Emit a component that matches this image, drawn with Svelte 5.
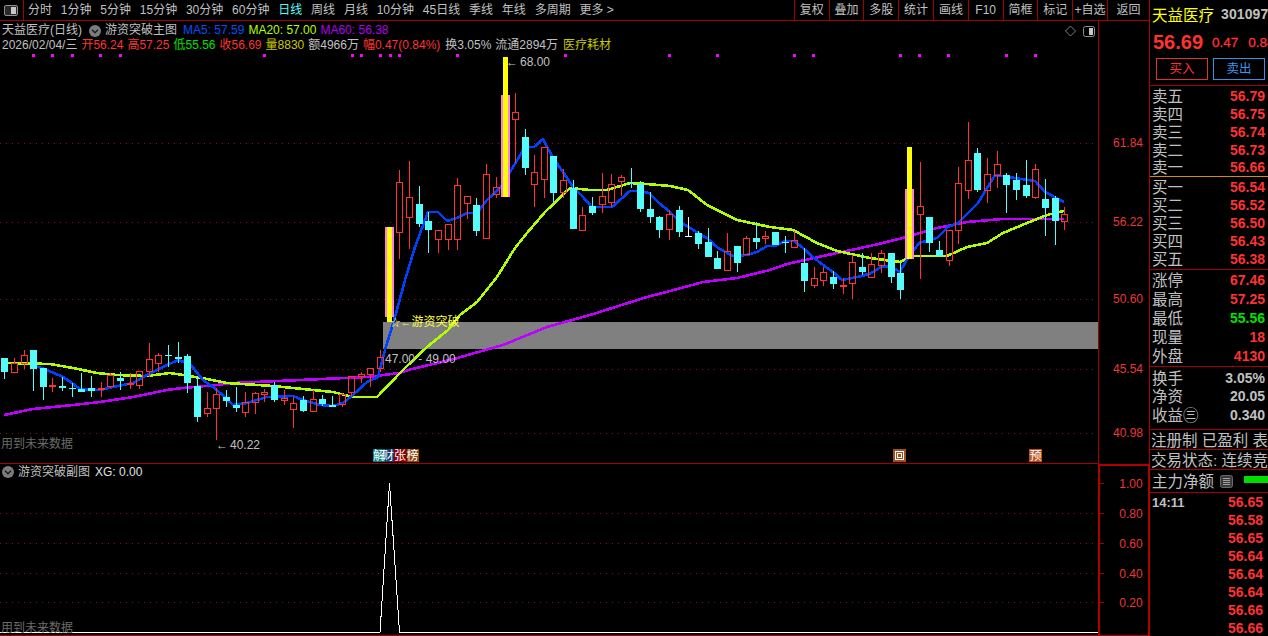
<script lang="ts">
  const periods = ['分时', '1分钟', '5分钟', '15分钟', '30分钟', '60分钟', '日线', '周线', '月线', '10分钟', '45日线', '季线', '年线', '多周期', '更多 >']
  const tools = ['复权', '叠加', '多股', '统计', '画线', 'F10', '简框', '标记', '+自选', '返回']

  // top, bottom, high, low, kind (r hollow red, c cyan, w white), null = signal bar
  type Bar = [number, number, number, number, string] | null
  const bars: Bar[] = [
    [358, 372, 358, 379, 'c'], [363, 372, 358, 372, 'r'], [355, 363, 350, 369, 'r'], [350, 369, 350, 391, 'c'],
    [368, 387, 368, 400, 'c'], [385, 386, 378, 392, 'r'], [386, 388, 377, 391, 'c'], [388, 389, 383, 397, 'c'],
    [389, 392, 373, 392, 'c'], [388, 391, 376, 397, 'c'], [388, 389, 382, 397, 'r'], [375, 386, 373, 388, 'r'],
    [378, 381, 372, 390, 'c'], [383, 384, 373, 389, 'r'], [371, 385, 371, 389, 'r'], [359, 371, 343, 377, 'r'],
    [355, 363, 353, 372, 'r'], [355, 356, 345, 367, 'c'], [357, 359, 342, 363, 'c'], [356, 383, 354, 393, 'c'],
    [386, 417, 376, 422, 'c'], [408, 413, 392, 417, 'r'], [394, 408, 388, 440, 'r'], [397, 401, 390, 407, 'c'],
    [405, 408, 387, 412, 'c'], [402, 412, 392, 417, 'r'], [393, 402, 392, 414, 'r'], [392, 394, 389, 402, 'r'],
    [385, 400, 382, 402, 'c'], [398, 400, 390, 405, 'r'], [403, 409, 397, 428, 'r'], [400, 411, 396, 412, 'c'],
    [399, 411, 390, 411, 'r'], [399, 404, 395, 406, 'c'], [405, 407, 396, 407, 'c'], [394, 404, 393, 407, 'r'],
    [376, 392, 376, 397, 'r'], [374, 376, 372, 383, 'r'], [368, 374, 368, 387, 'r'], [357, 368, 350, 372, 'r'],
    null,
    [182, 232, 170, 259, 'r'], [197, 217, 161, 249, 'r'], [204, 224, 186, 227, 'c'], [221, 230, 212, 253, 'c'],
    [230, 239, 230, 253, 'r'], [224, 239, 224, 250, 'r'], [185, 239, 178, 250, 'r'], [196, 203, 196, 219, 'r'],
    [205, 231, 198, 236, 'c'], [174, 238, 164, 238, 'r'], [187, 194, 177, 198, 'r'],
    null,
    [112, 119, 93, 163, 'r'], [137, 168, 129, 175, 'c'], [172, 184, 155, 207, 'r'], [147, 179, 147, 198, 'r'],
    [156, 193, 156, 204, 'c'], [180, 192, 169, 198, 'r'], [188, 229, 180, 229, 'c'], [215, 230, 207, 230, 'r'],
    [206, 213, 197, 215, 'c'], [196, 204, 173, 213, 'r'], [184, 202, 174, 207, 'r'], [177, 181, 175, 196, 'r'],
    [182, 183, 168, 188, 'c'], [184, 209, 181, 212, 'c'], [209, 217, 192, 223, 'c'], [217, 230, 216, 238, 'c'],
    [214, 229, 210, 240, 'r'], [210, 232, 206, 237, 'c'], [236, 236, 217, 237, 'w'], [233, 244, 231, 249, 'c'],
    [242, 257, 228, 257, 'c'], [258, 269, 251, 269, 'c'], [251, 270, 233, 270, 'r'], [246, 263, 246, 272, 'c'],
    [238, 254, 236, 254, 'r'], [238, 242, 222, 249, 'c'], [236, 238, 231, 244, 'r'], [232, 245, 232, 245, 'c'],
    [242, 243, 236, 253, 'c'], [240, 247, 231, 247, 'r'], [263, 281, 248, 292, 'c'], [278, 285, 267, 288, 'r'],
    [272, 280, 267, 286, 'r'], [277, 284, 271, 289, 'c'], [285, 286, 278, 294, 'r'], [262, 283, 255, 299, 'r'],
    [267, 272, 253, 275, 'c'], [264, 277, 253, 277, 'r'], [253, 265, 250, 273, 'r'], [253, 277, 253, 283, 'c'],
    [273, 290, 263, 299, 'c'],
    null,
    [206, 214, 162, 279, 'r'], [217, 243, 217, 252, 'c'], [250, 256, 241, 256, 'c'], [230, 260, 230, 266, 'r'],
    [183, 230, 167, 244, 'r'], [160, 190, 122, 199, 'r'], [153, 190, 148, 192, 'c'], [174, 190, 158, 203, 'r'],
    [164, 175, 151, 188, 'r'], [175, 185, 173, 213, 'c'], [180, 190, 173, 200, 'c'], [185, 196, 160, 198, 'c'],
    [169, 197, 164, 199, 'r'], [199, 208, 179, 236, 'c'], [198, 221, 196, 245, 'c'], [214, 221, 207, 230, 'r'],
  ]
  const barX = (i: number) => Math.round(4.3 + 9.635 * i)

  // signal bars: left x, pink top, yellow top, bottom of pink, bottom of yellow
  const signals = [
    { x: 385, top: 227, yTop: 227, bottom: 317, yBottom: 322 },
    { x: 501, top: 95, yTop: 57, bottom: 197, yBottom: 197 },
    { x: 905, top: 189, yTop: 147, bottom: 259, yBottom: 259 },
  ]

  const ma5 = '33,365 47,370 63,377 72,383 80,389 100,390 113,387 133,383 147,375 167,365 178,360 190,364 203,380 217,390 233,405 247,403 267,397 293,396 303,400 320,405 333,406 343,403 353,395 367,382 378,377 385,350 395,317 405,280 415,247 428,212 438,212 447,221 457,218 467,213 477,213 487,200 501,187 510,172 525,147 534,147 543,139 553,158 563,172 573,187 583,197 592,207 612,207 630,191 640,191 649,193 659,203 670,212 680,222 690,228 698,233 707,238 718,248 733,256 747,255 757,252 767,246 775,246 785,241 794,241 803,248 813,257 823,265 833,272 842,280 862,276 871,273 881,267 890,266 900,272 908,258 919,243 937,238 948,227 958,223 978,203 995,175 1035,181 1045,192 1064,202'
  const ma20 = '8,363 50,364 73,368 97,373 117,375 147,376 170,373 183,375 207,379 227,383 273,386 293,388 333,392 353,397 377,397 400,373 405,368 427,347 448,330 460,315 477,302 497,277 515,248 527,233 545,212 570,188 590,190 607,190 630,183 647,184 670,186 688,190 707,205 737,220 770,227 793,230 817,243 837,251 870,258 900,262 913,256 947,256 967,247 987,243 1003,233 1027,223 1047,215 1064,211'
  const ma60 = '4,415 33,409 73,405 100,402 133,397 167,390 183,388 217,385 233,383 300,380 367,377 400,373 408,370 450,360 503,345 547,327 590,315 647,297 670,291 703,282 737,278 770,270 787,264 823,256 870,246 903,238 937,228 967,222 1003,219 1064,219'

  const marks = [32, 51, 71, 99, 119, 263, 351, 360, 379, 389, 398, 456, 564, 668, 716, 793, 812, 899, 918, 947, 1005, 1034]
  const mainGrid = [
    { y: 143, label: '61.84' },
    { y: 222, label: '56.22' },
    { y: 299, label: '50.60' },
    { y: 369, label: '45.54' },
    { y: 433, label: '40.98' },
  ]
  const subGrid = [
    { y: 483, label: '1.00', line: false },
    { y: 513, label: '0.80', line: true },
    { y: 543, label: '0.60', line: true },
    { y: 573, label: '0.40', line: true },
    { y: 602, label: '0.20', line: true },
  ]

  const sells = [['卖五', '56.79'], ['卖四', '56.75'], ['卖三', '56.74'], ['卖二', '56.73'], ['卖一', '56.66']]
  const buys = [['买一', '56.54'], ['买二', '56.52'], ['买三', '56.50'], ['买四', '56.43'], ['买五', '56.38']]
  const stats = [['涨停', '67.46', 'up'], ['最高', '57.25', 'up'], ['最低', '55.56', 'down'], ['现量', '18', 'up'], ['外盘', '4130', 'up']]
  const ratios = [['换手', '3.05%'], ['净资', '20.05'], ['收益㊂', '0.340']]
  const ticks = ['56.65', '56.58', '56.65', '56.64', '56.64', '56.64', '56.66', '56.66']
</script>

<div class="screen">
  <div class="left">
    <nav class="toolbar">
      <div class="toggle-cell">
        <span class="toggle"><span></span></span>
      </div>
      <div class="periods">
        {#each periods as p}
          <span class:active={p === '日线'}>{p}</span>
        {/each}
      </div>
      <div class="tools">
        {#each tools as t}
          <span class="tool">{t}</span>
        {/each}
      </div>
    </nav>

    <section class="pane main-pane">
      <svg class="chart" width="1149" height="443" viewBox="0 21 1149 443">
        {#each mainGrid as g}
          <line class="grid" x1="0" x2="1098" y1={g.y + 0.5} y2={g.y + 0.5} />
          <text class="axis" x="1128" y={g.y + 4} text-anchor="middle">{g.label}</text>
        {/each}
        {#each marks as m}
          <rect x={m} y="54" width="3" height="3" fill="#ff00ff" />
        {/each}
        <rect x="383" y="322" width="715" height="27" fill="#808080" />

        <polyline class="ma" points={ma60} stroke="#c000ff" />
        <polyline class="ma" points={ma20} stroke="#b0ff00" />
        <polyline class="ma" points={ma5} stroke="#0040ff" />

        {#each bars as b, i}
          {#if b}
            {@const x = barX(i)}
            {@const color = b[4] === 'r' ? '#ff3232' : b[4] === 'w' ? '#ffffff' : '#54fcfc'}
            <rect class="px" x={x} y={b[2]} width="1" height={b[0] - b[2]} fill={color} />
            <rect class="px" x={x} y={b[1]} width="1" height={b[3] - b[1]} fill={color} />
            {#if b[4] === 'r'}
              <rect class="px" x={x - 2.5} y={b[0] + 0.5} width="6" height={b[1] - b[0]} fill="none" stroke={color} />
            {:else}
              <rect class="px" x={x - 3} y={b[0]} width="7" height={Math.max(b[1] - b[0], 1)} fill={color} />
            {/if}
          {/if}
        {/each}

        {#each signals as s}
          <rect class="px" x={s.x} y={s.top} width="9" height={s.bottom - s.top} fill="#ff80e0" />
          <rect class="px" x={s.x + 2} y={s.yTop} width="5" height={s.yBottom - s.yTop} fill="#ffff00" />
        {/each}

        <text class="note" x="506" y="66">←<tspan dx="2">68.00</tspan></text>
        <text class="note" x="216" y="449">←<tspan dx="2">40.22</tspan></text>
        <text class="note" x="385" y="363">47.00 - 49.00</text>
        <text class="signal small" x="390" y="326">☆←</text>
        <text class="signal" x="411.5" y="326">游资突破</text>
        <text class="faint" x="1" y="448">用到未来数据</text>

        <rect x="373" y="449" width="13" height="13" fill="#007a80" />
        <rect x="385" y="449" width="9" height="13" fill="#103c70" />
        <rect x="394" y="449" width="13" height="13" fill="#8b0000" />
        <rect x="407" y="449" width="12" height="13" fill="#8b4a10" />
        <text class="badge" x="373" y="460">解</text>
        <text class="badge" x="382" y="460">财</text>
        <text class="badge" x="394" y="460">张</text>
        <text class="badge" x="406.5" y="460">榜</text>

        <rect x="893" y="449" width="13" height="13" fill="#a0501a" />
        <rect class="px" x="895.5" y="451.5" width="8" height="8" fill="none" stroke="#fff" />
        <rect class="px" x="897.5" y="453.5" width="4" height="4" fill="none" stroke="#fff" />
        <rect x="1029" y="449" width="13" height="13" fill="#b8501a" />
        <text class="badge" x="1029.5" y="460">预</text>

        <path d="M1070.5 26 L1075.5 31 L1070.5 36 L1065.5 31 Z" fill="none" stroke="#808080" />
        <rect x="1083.5" y="26.5" width="11" height="10" rx="2" fill="none" stroke="#909090" />
        <rect x="1089" y="28" width="4" height="7" fill="#c8c8c8" />
        <rect x="1098" y="21" width="1" height="443" fill="#a50000" />
      </svg>

      <div class="legend">
        <div class="legend-row">
          <span class="txt">天益医疗(日线)</span>
          <svg class="chevron" width="12" height="12" viewBox="0 0 12 12">
            <circle cx="6" cy="6" r="6" fill="#7c7c7c" />
            <path d="M3 4.8 L6 7.8 L9 4.8" fill="none" stroke="#1c1c1c" stroke-width="1.4" />
          </svg>
          <span class="txt">游资突破主图</span>
          <span class="ma5">MA5: 57.59</span>
          <span class="ma20">MA20: 57.00</span>
          <span class="ma60">MA60: 56.38</span>
        </div>
        <div class="legend-row quote">
          <span class="txt">2026/02/04/三</span>
          <span class="up">开56.24</span>
          <span class="up">高57.25</span>
          <span class="down">低55.56</span>
          <span class="up">收56.69</span>
          <span class="vol">量8830</span>
          <span class="txt">额4966万</span>
          <span class="up">幅0.47(0.84%)</span>
          <span class="txt turnover">换3.05%</span>
          <span class="txt">流通2894万</span>
          <span class="vol sector">医疗耗材</span>
        </div>
      </div>
    </section>

    <section class="pane sub-pane">
      <svg class="chart" width="1149" height="172" viewBox="0 464 1149 172">
        {#each subGrid as g}
          {#if g.line}
            <line class="grid" x1="0" x2="1098" y1={g.y + 0.5} y2={g.y + 0.5} />
          {/if}
          <rect x="1099" y={g.y} width="5" height="1" fill="#a50000" />
          <text class="axis" x="1131" y={g.y + 5} text-anchor="middle">{g.label}</text>
        {/each}
        <polyline class="px" points="0,632.5 380,632.5 389.5,483 399.5,632.5 1098,632.5" fill="none" stroke="#ffffff" stroke-width="1" />
        <text class="faint" x="1" y="632">用到未来数据</text>
        <rect x="0" y="635" width="1149" height="1" fill="#a50000" />
        <rect x="1098" y="464" width="2" height="172" fill="#b00000" />
        <rect x="1098" y="464" width="51" height="2" fill="#b00000" />
        <rect x="1148" y="464" width="1" height="172" fill="#b00000" />
      </svg>

      <div class="legend legend-sub">
        <div class="legend-row">
          <svg class="chevron first" width="12" height="12" viewBox="0 0 12 12">
            <circle cx="6" cy="6" r="6" fill="#7c7c7c" />
            <path d="M3 4.8 L6 7.8 L9 4.8" fill="none" stroke="#1c1c1c" stroke-width="1.4" />
          </svg>
          <span class="txt">游资突破副图</span>
          <span class="white">XG: 0.00</span>
        </div>
      </div>
    </section>
  </div>

  <aside class="panel">
    <header class="head section">
      <div class="name-row"><span class="name">天益医疗</span><span class="code">301097</span></div>
      <div class="price-row">
        <span class="price">56.69</span><span class="change">0.47</span><span class="change pct">0.84%</span>
      </div>
      <div class="trade">
        <span class="trade-btn buy">买入</span>
        <span class="trade-btn sell">卖出</span>
      </div>
    </header>

    <div class="section sells orange">
      {#each sells as [k, v]}
        <div class="row sell-row"><span class="label">{k}</span><span class="val up">{v}</span></div>
      {/each}
    </div>
    <div class="section buys">
      {#each buys as [k, v]}
        <div class="row buy-row"><span class="label">{k}</span><span class="val up">{v}</span></div>
      {/each}
    </div>
    <div class="section stats">
      {#each stats as [k, v, dir]}
        <div class="row stat-row">
          <span class="label">{k}</span><span class="val" class:up={dir === 'up'} class:down={dir === 'down'}>{v}</span>
        </div>
      {/each}
    </div>
    <div class="section ratios">
      {#each ratios as [k, v]}
        <div class="row ratio-row"><span class="label">{k}</span><span class="val gray">{v}</span></div>
      {/each}
    </div>
    <div class="section line note-line"><span class="label">注册制 已盈利 表</span></div>
    <div class="section line status-line"><span class="label">交易状态: 连续竞</span></div>
    <div class="section line flow-line">
      <span class="label">主力净额</span>
      <svg class="sheet" width="13" height="13" viewBox="0 0 13 13">
        <rect x="0.5" y="0.5" width="12" height="12" rx="2" fill="#3a3a3a" stroke="#6a6a6a" />
        <path d="M3 3.5 H10 M3 5.5 H10 M3 7.5 H10 M3 9.5 H10" stroke="#a0a0a0" />
      </svg>
      <span class="flow-bar"></span>
    </div>
    <div class="tick-list">
      {#each ticks as t, i}
        <div class="tick-row">
          <span class="tick-time">{i === 0 ? '14:11' : ''}</span><span class="val up">{t}</span>
        </div>
      {/each}
    </div>
  </aside>
</div>

<style>
  :global(body) {
    margin: 0;
    background: #000;
    overflow: hidden;
  }
  .screen {
    display: flex;
    width: 1268px;
    height: 636px;
    overflow: hidden;
    background: #000;
    color: #c0c0c0;
    font-family: 'Liberation Sans', 'Noto Sans CJK SC', sans-serif;
    font-size: 12px;
  }
  .left {
    width: 1149px;
    flex-shrink: 0;
  }
  .toolbar {
    display: flex;
    align-items: stretch;
    height: 20px;
    border-bottom: 1px solid #a50000;
    white-space: nowrap;
    line-height: 20px;
  }
  .toggle-cell {
    display: flex;
    align-items: center;
    justify-content: center;
    box-sizing: border-box;
    width: 24px;
    padding-right: 1px;
    border-right: 1px solid #a50000;
  }
  .toggle {
    display: flex;
    justify-content: flex-end;
    box-sizing: border-box;
    width: 14px;
    height: 11px;
    padding: 1px;
    border: 1px solid #909090;
    border-radius: 2px;
    background: #2a2a2a;
  }
  .toggle span {
    width: 5px;
    background: #c8c8c8;
  }
  .periods {
    display: flex;
    gap: 8.8px;
    padding-left: 4px;
  }
  .periods .active {
    color: #54fcfc;
  }
  .tools {
    display: flex;
    margin-left: auto;
  }
  .tool {
    box-sizing: border-box;
    width: 34.8px;
    border-left: 1px solid #a50000;
    text-align: center;
  }
  .tool:last-child {
    width: 42px;
  }
  .pane {
    position: relative;
  }
  .main-pane {
    height: 443px;
  }
  .main-pane::after {
    content: '';
    position: absolute;
    left: 0;
    right: 51px;
    bottom: 0;
    height: 1px;
    background: #a50000;
  }
  .sub-pane {
    height: 172px;
  }
  .chart {
    display: block;
  }
  .grid {
    stroke: #8a1414;
    stroke-dasharray: 1 5;
    shape-rendering: crispEdges;
  }
  .ma {
    fill: none;
    stroke-width: 2.6;
    stroke-linejoin: round;
    shape-rendering: crispEdges;
  }
  .px {
    shape-rendering: crispEdges;
  }
  .axis {
    fill: #e83838;
    font-size: 12px;
  }
  .note {
    fill: #c0c0c0;
    font-size: 12px;
  }
  .signal {
    fill: #ffff40;
    font-size: 12px;
  }
  .signal.small {
    font-size: 10.5px;
  }
  .faint {
    fill: #6c6c6c;
    font-size: 12px;
  }
  .badge {
    fill: #fff;
    font-size: 12px;
  }
  .legend {
    position: absolute;
    top: 2px;
    left: 2px;
    white-space: nowrap;
    line-height: 15px;
  }
  .legend-sub {
    top: 0;
    left: 1px;
    line-height: 16px;
  }
  .legend-row {
    display: flex;
    align-items: center;
    gap: 4px;
    height: 15px;
  }
  .legend-sub .legend-row {
    height: 16px;
    gap: 3px;
  }
  .chevron {
    margin: 0 0 0 3px;
  }
  .chevron.first {
    margin: 0 1px;
  }
  .ma5 {
    margin-left: 2px;
    color: #0050ff;
  }
  .ma20 {
    color: #b0ff00;
  }
  .ma60 {
    color: #b000f0;
  }
  .up {
    color: #ff3232;
  }
  .down {
    color: #00e000;
  }
  .vol {
    color: #c8c800;
  }
  .white {
    color: #e0e0e0;
    margin-left: 2px;
  }
  .turnover {
    margin-left: 1px;
  }
  .sector {
    margin-left: 1px;
  }
  .panel {
    box-sizing: border-box;
    width: 119px;
    height: 636px;
    flex-shrink: 0;
    border-left: 1px solid #b00000;
    overflow: hidden;
  }
  .section {
    box-sizing: border-box;
    border-bottom: 1px solid #a50000;
  }
  .head {
    height: 86px;
  }
  .name-row {
    display: flex;
    align-items: center;
    gap: 7px;
    height: 28px;
    padding: 0 0 0 2px;
    white-space: nowrap;
  }
  .name {
    color: #ffff00;
    font-size: 15.5px;
  }
  .code {
    font-size: 14px;
    font-weight: 700;
    letter-spacing: 0.1px;
  }
  .price-row {
    display: flex;
    align-items: center;
    height: 24px;
    margin-top: 2px;
    padding-left: 3px;
    white-space: nowrap;
    color: #ff3232;
    font-weight: 700;
  }
  .price {
    font-size: 20px;
  }
  .change {
    margin-left: 9px;
    font-size: 13.5px;
    font-weight: 400;
    -webkit-text-stroke: 0.3px #ff3232;
  }
  .change.pct {
    margin-left: 10px;
  }
  .trade {
    display: flex;
    gap: 5px;
    margin-top: 4px;
    padding-left: 6px;
  }
  .trade-btn {
    box-sizing: border-box;
    width: 52px;
    height: 22px;
    border: 1px solid;
    text-align: center;
    font-size: 12.5px;
    line-height: 20px;
  }
  .trade-btn.buy {
    color: #ff3232;
    border-color: #e03030;
  }
  .trade-btn.sell {
    color: #3a96f0;
    border-color: #3a8ee6;
  }
  .row {
    display: flex;
    align-items: center;
    justify-content: space-between;
    padding: 0 3px 0 2px;
  }
  .label {
    padding-bottom: 2px;
    font-size: 15.5px;
    white-space: nowrap;
  }
  .val {
    font-size: 14px;
    font-weight: 700;
  }
  .gray {
    color: #c0c0c0;
  }
  .sells {
    height: 91px;
    padding-top: 1.5px;
  }
  .orange {
    border-bottom-color: #d88a00;
  }
  .sell-row {
    height: 17.75px;
  }
  .buys {
    height: 93px;
    padding-top: 1px;
  }
  .buy-row {
    height: 18px;
  }
  .stats {
    height: 97px;
    padding-top: 0.5px;
  }
  .stat-row {
    height: 19px;
  }
  .ratios {
    height: 63px;
    padding-top: 1.5px;
  }
  .ratio-row {
    height: 18.5px;
  }
  .line {
    display: flex;
    align-items: center;
    padding-left: 1px;
    overflow: hidden;
    white-space: nowrap;
  }
  .note-line,
  .status-line {
    height: 20px;
  }
  .flow-line {
    height: 23px;
    padding-left: 2px;
  }
  .sheet {
    flex-shrink: 0;
    margin-left: 6px;
  }
  .flow-bar {
    flex-shrink: 0;
    width: 26px;
    height: 7px;
    margin-left: 11px;
    margin-bottom: 3px;
    background: #00dd00;
  }
  .tick-row {
    display: flex;
    align-items: center;
    justify-content: space-between;
    height: 18px;
    padding: 0 5px 0 2px;
  }
  .tick-time {
    font-size: 13px;
    font-weight: 700;
  }
</style>
